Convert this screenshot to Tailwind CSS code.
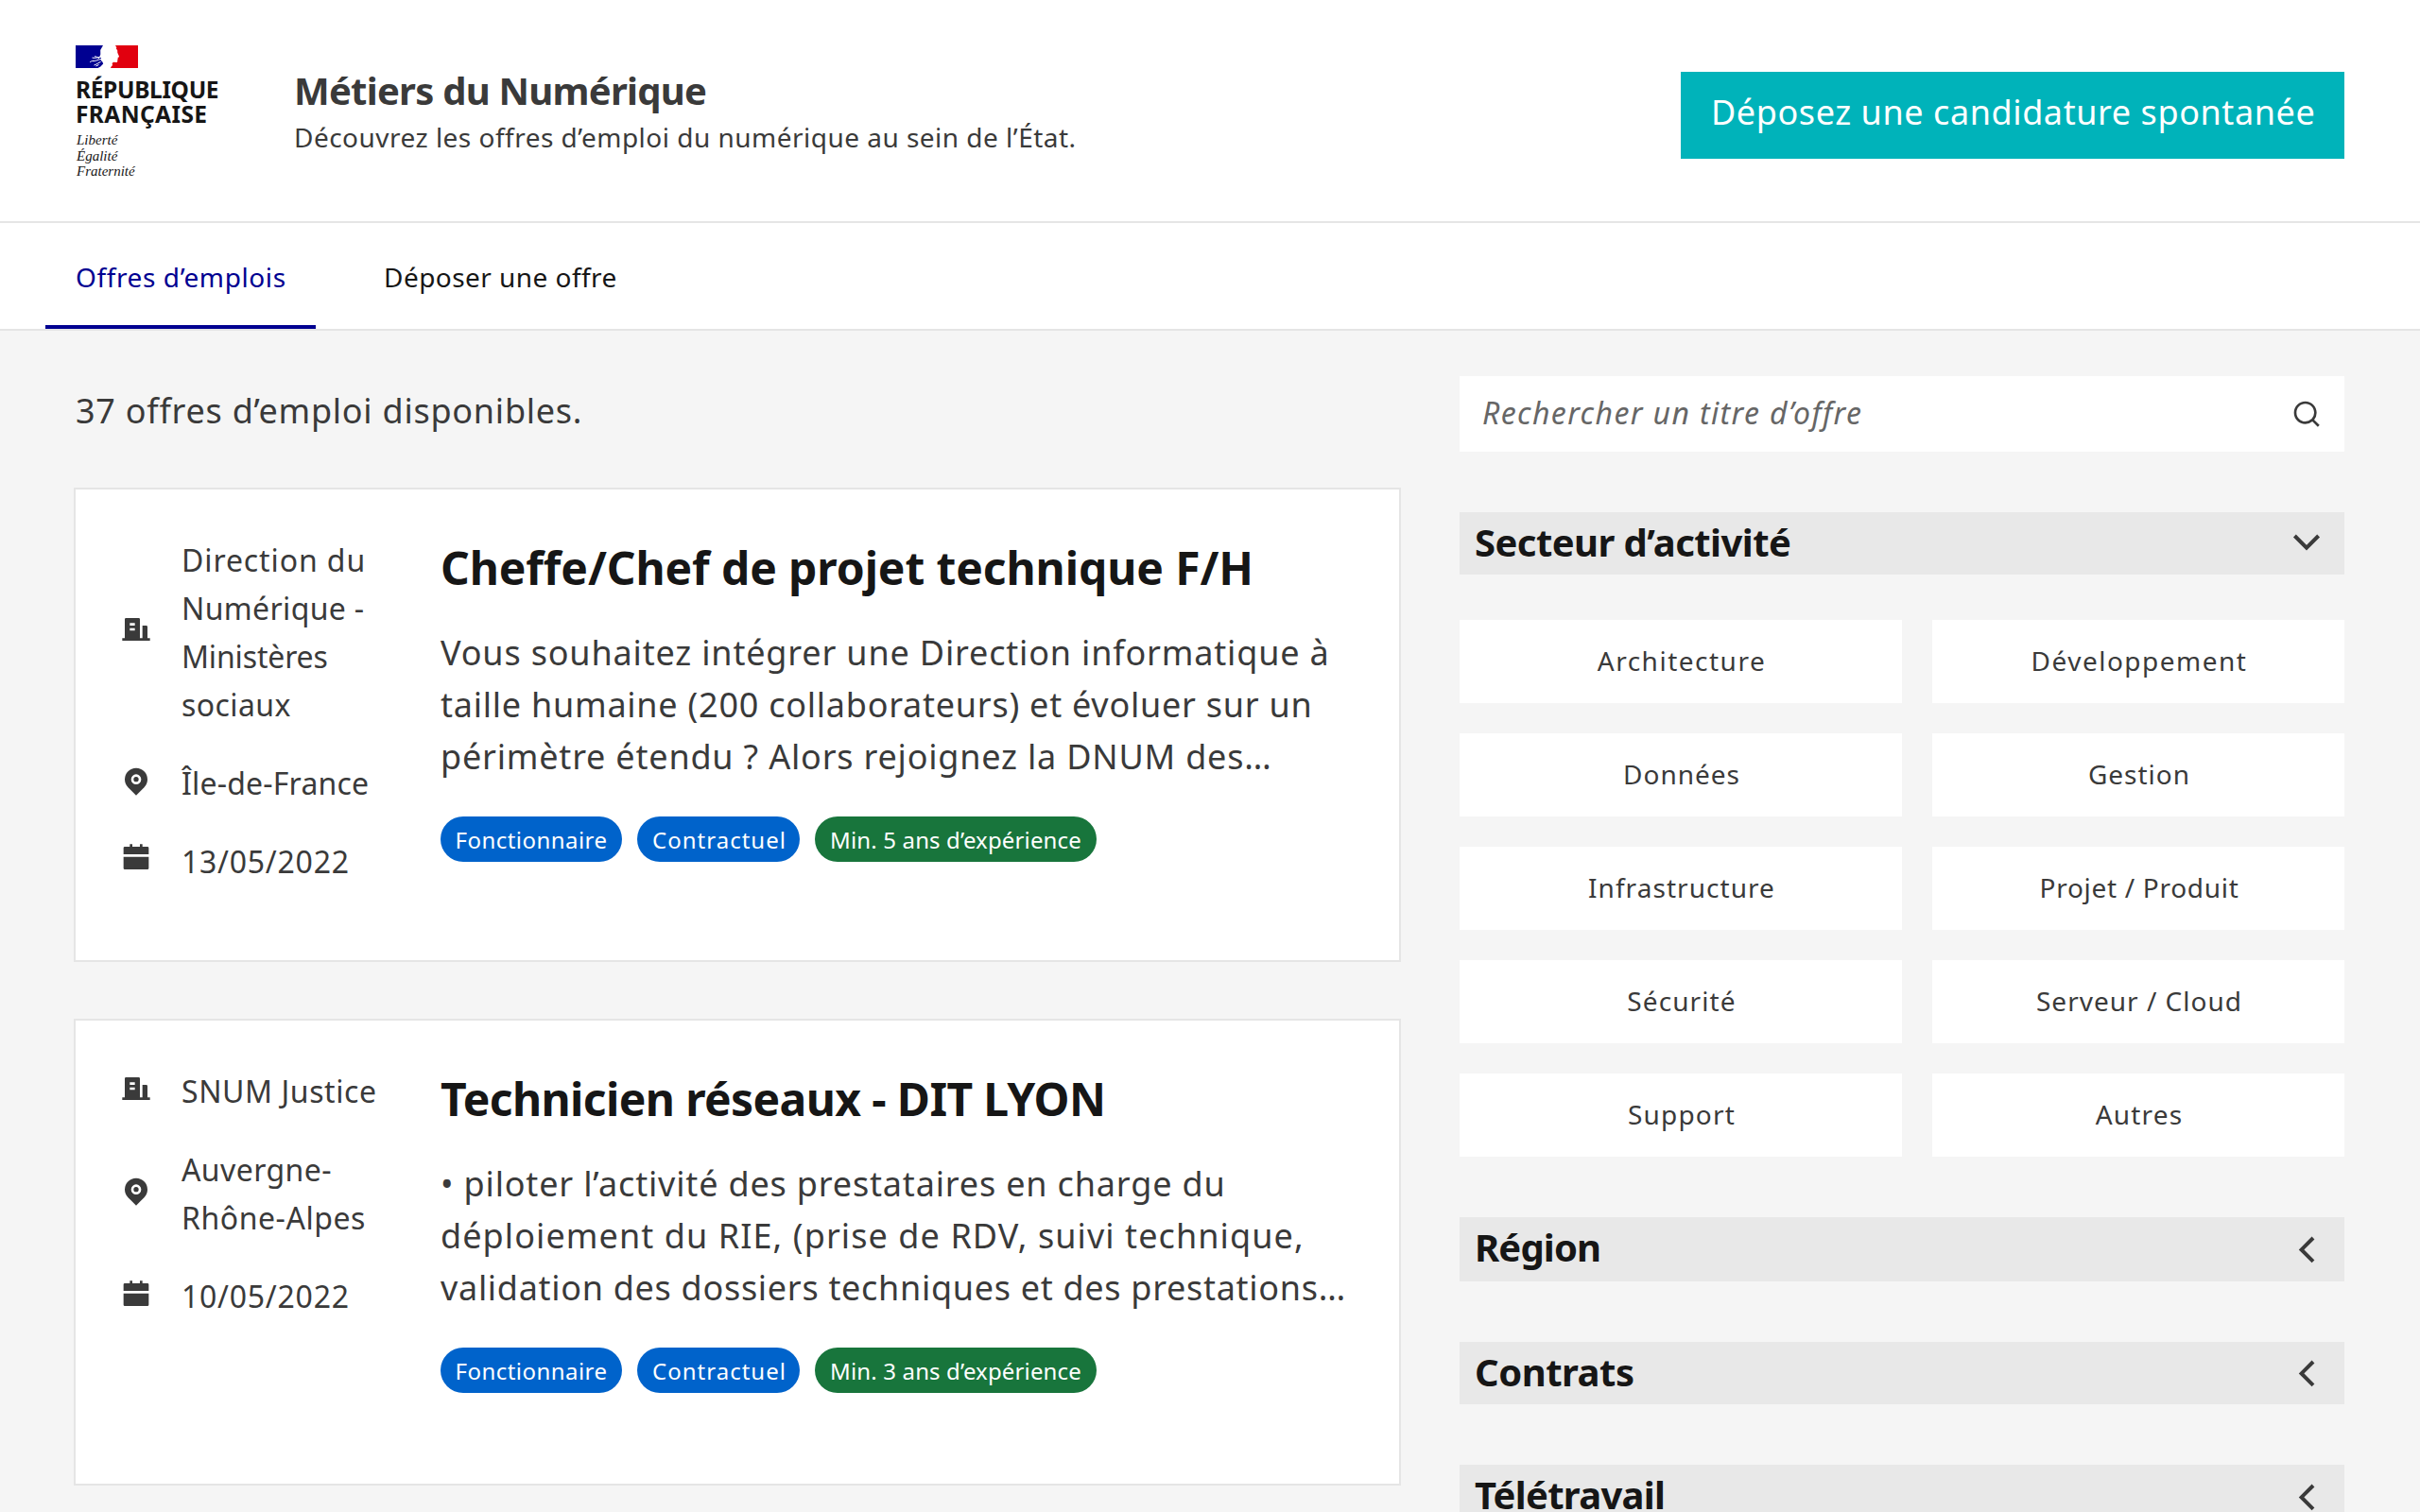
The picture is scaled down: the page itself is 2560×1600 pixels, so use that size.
<!DOCTYPE html>
<html lang="fr">
<head>
<meta charset="utf-8">
<title>Métiers du Numérique</title>
<script src="https://cdn.jsdelivr.net/npm/@tailwindcss/browser@4"></script>
</head>
<body class="w-[2560px] h-[1600px] overflow-hidden bg-[#f5f5f5] font-['Noto_Sans','Open_Sans',sans-serif] text-[#3a3a3a]">

<svg class="hidden">
  <symbol id="building" viewBox="0 0 24 24"><path d="M21 19h2v2H1v-2h2V4a1 1 0 0 1 1-1h10a1 1 0 0 1 1 1v15h2V9h3a1 1 0 0 1 1 1v9zM7 11v2h4v-2H7zm0-4v2h4V7H7z"/></symbol>
  <symbol id="pin" viewBox="0 0 24 24"><path d="M18.364 17.364L12 23.728l-6.364-6.364a9 9 0 1 1 12.728 0zM12 15a4 4 0 1 0 0-8 4 4 0 0 0 0 8zm0-2a2 2 0 1 1 0-4 2 2 0 0 1 0 4z"/></symbol>
  <symbol id="calendar" viewBox="0 0 24 24"><path d="M2 11h20v9a1 1 0 0 1-1 1H3a1 1 0 0 1-1-1v-9zm15-8h4a1 1 0 0 1 1 1v5H2V4a1 1 0 0 1 1-1h4V1h2v2h6V1h2v2z"/></symbol>
  <symbol id="chevron-left" viewBox="0 0 32 32"><path d="M23 4L10.6 16.4 23 28.8" fill="none" stroke="#3a3a3a" stroke-width="4"/></symbol>
</svg>

<header class="flex h-[236px] border-b-2 border-[#e5e5e5] bg-white pl-20 pr-20">
  <div class="w-[231px] pt-12 text-[#161616]">
    <svg class="block w-[66px] h-6" viewBox="0 0 66 24">
      <path fill="#000091" d="M0 0h33v24H0z"/>
      <path fill="#e1000f" d="M33 0h33v24H33z"/>
      <path fill="#fff" d="M29 0h13l1.300 2.200-.4 1.200 1.300 1.800.1 2.600 1.700 3.900-.3.900-1.200.5.300 1.200-.6.900.2 1.600-.8 1.200-3.800-.2-1.200 1.400.5 1.800-1.300 1.200L37 24H23.500l2.800-1.400 2.900-3-.8-2.100-1.800-1.800.5-2.200-1.700-1.700.9-2.200-.1-4.600z"/>
      <path fill="none" stroke="#fff" stroke-width="1" d="M27 12.500c-3-.5-5 1.500-9.500.6M27 14.500c-4 .5-5.500 2.500-9 2-1 0-2 .5-3 1.500M26.500 17.500c-2 .5-4 2.700-7 3.500M20 11.800c1.500-.2 3.500.9 5 2M24.500 20.500l-3 1.500"/>
    </svg>
    <p class="mt-2.5 text-[24.5px] leading-[26px] font-bold tracking-[-0.35px]">RÉPUBLIQUE</p>
    <p class="text-[24.5px] leading-[26px] font-bold tracking-[0.4px]">FRANÇAISE</p>
    <div class="mt-1.5 pl-px font-['Liberation_Serif',serif] italic text-[15px] leading-[16.5px]">
      <p>Liberté</p>
      <p>Égalité</p>
      <p>Fraternité</p>
    </div>
  </div>
  <div class="grow pt-[71px]">
    <h1 class="text-[40px] leading-[50px] font-bold tracking-[-0.75px]">Métiers du Numérique</h1>
    <p class="text-[28px] leading-[48px] tracking-[0.48px]">Découvrez les offres d’emploi du numérique au sein de l’État.</p>
  </div>
  <a class="mt-[76px] h-[92px] w-[702px] bg-[#00b3ba] pl-8 text-[36px] leading-[86px] tracking-[0.58px] text-white">Déposez une candidature spontanée</a>
</header>

<nav class="flex h-[114px] gap-10 border-b-2 border-[#e5e5e5] bg-white pl-12 text-[28px] text-[#161616]">
  <a class="h-[112px] w-[286px] border-b-4 border-[#000091] pt-1 pl-8 leading-[106px] tracking-[0.6px] text-[#000091]">Offres d’emplois</a>
  <a class="h-[112px] pt-1 pl-8 leading-[106px] tracking-[0.45px]">Déposer une offre</a>
</nav>

<main class="flex pl-[78px] pr-20">
  <section class="w-[1404px] pt-[58px]">
    <p class="pl-0.5 text-[36px] leading-[54px] tracking-[0.75px]">37 offres d’emploi disponibles.</p>

    <article class="mt-[54px] flex h-[502px] border-2 border-[#e5e5e5] bg-white pt-[49px] pl-12">
      <ul class="flex w-[338px] flex-col gap-8 text-[32px] leading-[51px]">
        <li class="flex items-center gap-8">
          <svg class="mb-1.5 size-8 shrink-0 fill-[#3a3a3a]"><use href="#building"/></svg>
          <div>
            <p class="tracking-[0.9px]">Direction du</p>
            <p class="tracking-[0.35px]">Numérique -</p>
            <p class="tracking-[-0.15px]">Ministères</p>
            <p class="tracking-[0.4px]">sociaux</p>
          </div>
        </li>
        <li class="flex items-center gap-8">
          <svg class="mb-1.5 size-8 shrink-0 fill-[#3a3a3a]"><use href="#pin"/></svg>
          <p class="tracking-[0.19px]">Île-de-France</p>
        </li>
        <li class="flex items-center gap-8">
          <svg class="mb-2 size-8 shrink-0 fill-[#3a3a3a]"><use href="#calendar"/></svg>
          <p class="tracking-[0.75px]">13/05/2022</p>
        </li>
      </ul>
      <div class="whitespace-nowrap">
        <h2 class="text-[48px] leading-[67px] font-bold tracking-[-0.1px] text-[#161616]">Cheffe/Chef de projet technique F/H</h2>
        <div class="mt-[29px] text-[36px] leading-[55px]">
          <p class="tracking-[0.83px]">Vous souhaitez intégrer une Direction informatique à</p>
          <p class="tracking-[0.75px]">taille humaine (200 collaborateurs) et évoluer sur un</p>
          <p class="tracking-[0.8px]">périmètre étendu ? Alors rejoignez la DNUM des…</p>
        </div>
        <div class="mt-9 flex gap-4 text-center text-[24px] leading-[49px] text-white">
          <span class="h-12 w-48 rounded-full bg-[#0063cb] tracking-[0.46px]">Fonctionnaire</span>
          <span class="h-12 w-[172px] rounded-full bg-[#0063cb] pl-0.5 tracking-[1px]">Contractuel</span>
          <span class="h-12 w-[298px] rounded-full bg-[#18753c] tracking-[0.14px]">Min. 5 ans d’expérience</span>
        </div>
      </div>
    </article>

    <article class="mt-[60px] flex h-[494px] border-2 border-[#e5e5e5] bg-white pt-[49px] pl-12">
      <ul class="flex w-[338px] flex-col gap-8 text-[32px] leading-[51px]">
        <li class="flex items-center gap-8">
          <svg class="mb-1.5 size-8 shrink-0 fill-[#3a3a3a]"><use href="#building"/></svg>
          <p class="tracking-[0.58px]">SNUM Justice</p>
        </li>
        <li class="flex items-center gap-8">
          <svg class="mb-1.5 size-8 shrink-0 fill-[#3a3a3a]"><use href="#pin"/></svg>
          <div>
            <p class="tracking-[0.4px]">Auvergne-</p>
            <p class="tracking-[0.55px]">Rhône-Alpes</p>
          </div>
        </li>
        <li class="flex items-center gap-8">
          <svg class="mb-1 size-8 shrink-0 fill-[#3a3a3a]"><use href="#calendar"/></svg>
          <p class="tracking-[0.75px]">10/05/2022</p>
        </li>
      </ul>
      <div class="whitespace-nowrap">
        <h2 class="text-[48px] leading-[67px] font-bold tracking-[-0.62px] text-[#161616]">Technicien réseaux - DIT LYON</h2>
        <div class="mt-[29px] text-[36px] leading-[55px]">
          <p class="tracking-[0.83px]">• piloter l’activité des prestataires en charge du</p>
          <p class="tracking-[1.08px]">déploiement du RIE, (prise de RDV, suivi technique,</p>
          <p class="tracking-[0.7px]">validation des dossiers techniques et des prestations…</p>
        </div>
        <div class="mt-9 flex gap-4 text-center text-[24px] leading-[49px] text-white">
          <span class="h-12 w-48 rounded-full bg-[#0063cb] tracking-[0.46px]">Fonctionnaire</span>
          <span class="h-12 w-[172px] rounded-full bg-[#0063cb] pl-0.5 tracking-[1px]">Contractuel</span>
          <span class="h-12 w-[298px] rounded-full bg-[#18753c] tracking-[0.14px]">Min. 3 ans d’expérience</span>
        </div>
      </div>
    </article>
  </section>

  <aside class="ml-[62px] w-[936px] pt-12">
    <div class="flex h-20 items-center justify-between bg-white px-6">
      <span class="mb-0.5 text-[32px] leading-[76px] italic tracking-[1.37px] text-[#666]">Rechercher un titre d’offre</span>
      <svg class="size-8 fill-[#3a3a3a]" viewBox="0 0 24 24"><path d="M18.031 16.617l4.283 4.282-1.415 1.415-4.282-4.283A8.960 8.960 0 0 1 11 20c-4.968 0-9-4.032-9-9s4.032-9 9-9 9 4.032 9 9a8.960 8.960 0 0 1-1.969 5.617zm-2.006-.742A6.977 6.977 0 0 0 18 11c0-3.868-3.133-7-7-7-3.868 0-7 3.132-7 7 0 3.867 3.132 7 7 7a6.977 6.977 0 0 0 4.875-1.975l.15-.15z"/></svg>
    </div>

    <div class="mt-16 flex h-[66px] items-center justify-between bg-[#e8e8e8] pr-6 pl-4">
      <h3 class="mb-1 text-[40px] leading-[61px] font-bold tracking-[-0.56px] text-[#161616]">Secteur d’activité</h3>
      <svg class="size-8" viewBox="0 0 32 32"><path d="M3.400 8L16 20.600 28.600 8" fill="none" stroke="#3a3a3a" stroke-width="4"/></svg>
    </div>

    <div class="mt-12 grid grid-cols-[468px_436px] gap-8 text-center text-[28px] leading-[87px]">
      <span class="h-[88px] bg-white pl-0.5 tracking-[1.5px]">Architecture</span>
      <span class="h-[88px] bg-white pl-0.5 tracking-[1.5px]">Développement</span>
      <span class="h-[88px] bg-white pl-0.5 tracking-[1px]">Données</span>
      <span class="h-[88px] bg-white pl-0.5 tracking-[1px]">Gestion</span>
      <span class="h-[88px] bg-white pl-0.5 tracking-[1.05px]">Infrastructure</span>
      <span class="h-[88px] bg-white pl-0.5 tracking-[0.7px]">Projet / Produit</span>
      <span class="h-[88px] bg-white pl-0.5 tracking-[1.1px]">Sécurité</span>
      <span class="h-[88px] bg-white pl-0.5 tracking-[1px]">Serveur / Cloud</span>
      <span class="h-[88px] bg-white pl-0.5 tracking-[1.2px]">Support</span>
      <span class="h-[88px] bg-white pl-0.5 tracking-[1.2px]">Autres</span>
    </div>

    <div class="mt-16 flex h-[68px] items-center justify-between bg-[#e8e8e8] pr-6 pl-4">
      <h3 class="mb-1.5 text-[40px] leading-[61px] font-bold tracking-[-0.87px] text-[#161616]">Région</h3>
      <svg class="size-8"><use href="#chevron-left"/></svg>
    </div>
    <div class="mt-16 flex h-[66px] items-center justify-between bg-[#e8e8e8] pr-6 pl-4">
      <h3 class="mb-1 text-[40px] leading-[61px] font-bold tracking-[-0.5px] text-[#161616]">Contrats</h3>
      <svg class="size-8"><use href="#chevron-left"/></svg>
    </div>
    <div class="mt-16 flex h-[68px] items-center justify-between bg-[#e8e8e8] pr-6 pl-4">
      <h3 class="mb-1.5 text-[40px] leading-[61px] font-bold tracking-[-0.7px] text-[#161616]">Télétravail</h3>
      <svg class="size-8"><use href="#chevron-left"/></svg>
    </div>
  </aside>
</main>
</body>
</html>
